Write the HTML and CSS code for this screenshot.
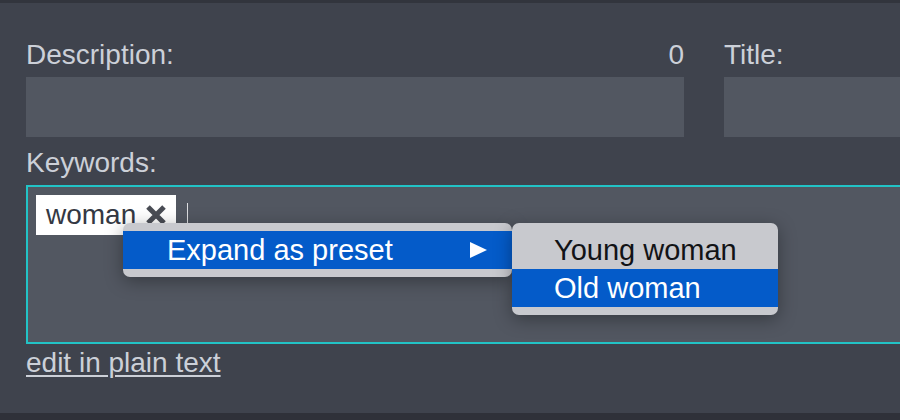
FILE: index.html
```html
<!DOCTYPE html>
<html>
<head>
<meta charset="utf-8">
<link rel="stylesheet" href="styles.css">
</head>
<body>
<div class="page">
  <div class="row">
    <div class="field desc">
      <div class="label-row"><span>Description:</span><span>0</span></div>
      <div class="input"></div>
    </div>
    <div class="field title">
      <div class="label-row"><span>Title:</span></div>
      <div class="input"></div>
    </div>
  </div>
  <div class="label-row kw-label"><span>Keywords:</span></div>
  <div class="kw-box">
    <div class="chips">
      <span class="chip">woman<svg class="x" width="22" height="20" viewBox="0 0 22 20"><path d="M3 2 L19 18 M19 2 L3 18" stroke="#4a4d55" stroke-width="5" fill="none"/></svg></span>
      <span class="caret"></span>
    </div>
    <div class="menu main">
      <div class="item active"><span>Expand as preset</span><svg width="17" height="16" viewBox="0 0 17 16"><path d="M0 0 L17 8 L0 16 Z" fill="#fff"/></svg></div>
    </div>
    <div class="menu sub">
      <div class="item">Young woman</div>
      <div class="item active">Old woman</div>
    </div>
  </div>
  <a class="plain" href="#">edit in plain text</a>
</div>
</body>
</html>
```

FILE: styles.css
```css
html, body {
  margin: 0;
  padding: 0;
}
body {
  width: 900px;
  height: 420px;
  overflow: hidden;
  background: #3f434d;
  font-family: "Liberation Sans", Arial, sans-serif;
  font-size: 28px;
  color: #ccd0d8;
}
.page {
  box-sizing: border-box;
  height: 420px;
  border-top: 3px solid #32353d;
  border-bottom: 7px solid #2f3139;
  padding-left: 26px;
  overflow: hidden;
}
.row {
  display: flex;
  gap: 40px;
  margin-top: 36px;
  width: 1100px;
}
.field.desc {
  width: 658px;
}
.field.title {
  width: 400px;
}
.label-row {
  display: flex;
  justify-content: space-between;
  height: 32px;
  line-height: 32px;
  margin-bottom: 6px;
}
.input {
  height: 60px;
  background: #525761;
}
.kw-label {
  margin-top: 10px;
}
.kw-box {
  position: relative;
  box-sizing: border-box;
  width: 1000px;
  height: 159px;
  border: 2px solid #22c3c6;
  background: #525761;
  padding: 8px;
}
.chips {
  display: flex;
  align-items: center;
  gap: 11px;
}
.chip {
  display: inline-flex;
  align-items: center;
  height: 40px;
  line-height: 40px;
  padding: 0 9px 0 10px;
  background: #ffffff;
  color: #343843;
  gap: 9px;
}
.x {
  display: block;
}
.caret {
  display: block;
  width: 1px;
  height: 22px;
  background: #dcdde0;
  margin-top: -3px;
}
.menu {
  position: absolute;
  top: 36px;
  background: #c8c9ce;
  border-radius: 7px;
  padding: 8px 0;
  font-size: 29px;
  box-shadow: 0 4px 18px rgba(0, 0, 0, 0.35);
}
.menu.main {
  left: 95px;
  width: 389px;
  z-index: 1;
}
.menu.sub {
  left: 484px;
  width: 266px;
  z-index: 2;
}
.item {
  height: 38px;
  line-height: 38px;
  color: #121316;
}
.menu.main .item {
  display: flex;
  align-items: center;
  justify-content: space-between;
  padding: 0 25px 0 44px;
}
.menu.sub .item {
  padding-left: 42px;
}
.item.active {
  background: #045bc9;
  color: #ffffff;
}
.plain {
  display: inline-block;
  margin-top: 3px;
  line-height: 32px;
  color: #ccd0d8;
  text-decoration: underline;
  text-underline-offset: 3px;
  text-decoration-thickness: 2px;
}
```
